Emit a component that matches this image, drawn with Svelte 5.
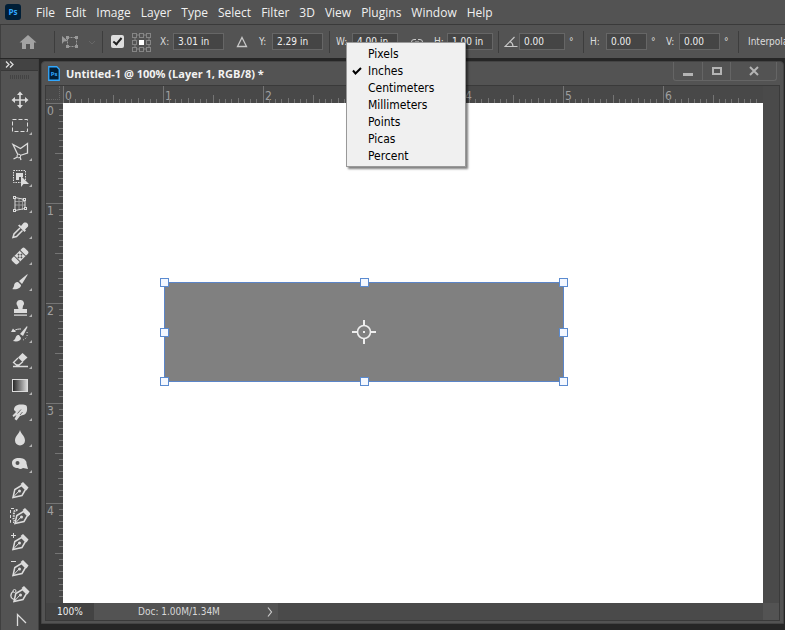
<script>
  const menus = ['File', 'Edit', 'Image', 'Layer', 'Type', 'Select', 'Filter', '3D', 'View', 'Plugins', 'Window', 'Help'];
  const units = ['Pixels', 'Inches', 'Centimeters', 'Millimeters', 'Points', 'Picas', 'Percent'];
  let unit = $state('Inches');
  let active = $state(true);
  const inch = 100;
  let box = $state({ x: '3.01 in', y: '2.29 in', w: '4.00 in', h: '1.00 in' });
  let w = $derived(parseFloat(box.w) * inch);
  let h = $derived(parseFloat(box.h) * inch);
  let left = $derived(Math.round(parseFloat(box.x) * inch - w / 2));
  let top = $derived(Math.round(parseFloat(box.y) * inch - h / 2));
  const handles = [[0, 0], [50, 0], [100, 0], [0, 50], [100, 50], [0, 100], [50, 100], [100, 100]];
  const ruler = (inches) => Array.from({ length: inches * 16 }, (_, i) => ({
    p: Math.floor(i * 6.25),
    len: i % 16 === 0 ? 17 : i % 8 === 0 ? 8 : i % 4 === 0 ? 5 : 4,
    label: i % 16 === 0 ? String(i / 16) : ''
  }));
  const across = ruler(7);
  const down = ruler(5);
  const pen = '<path d="M3 17.500L4.800 9.500l6.700-4 4 4-3.500 6z" fill="none" stroke="#dcdcdc" stroke-width="1.500"/><path d="M3 17.500l6-6.500" stroke="#dcdcdc"/><circle cx="9.500" cy="11" r="1.500" fill="#dcdcdc"/><path d="M10.500 4L13 2l5.500 5.500-2 3z" fill="#dcdcdc"/>';
  const tools = [
    { name: 'Move', more: false, art: '<path d="M10 3v14M3 10h14" stroke="#dcdcdc" stroke-width="1.600"/><path d="M10 1.500L7 5h6zM10 18.500L7 15h6zM1.500 10L5 7v6zM18.500 10L15 7v6z" fill="#dcdcdc"/>' },
    { name: 'Rectangular Marquee', more: true, art: '<rect x="2.500" y="3.500" width="15" height="12" fill="none" stroke="#dcdcdc" stroke-dasharray="4 2"/>' },
    { name: 'Polygonal Lasso', more: true, art: '<path d="M8 13L3 2.500l7.500 4 7-5V11L10 13.500M3.500 17l4-2M10 15l1 3" fill="none" stroke="#dcdcdc" stroke-width="1.300"/><circle cx="8.800" cy="14" r="1.800" fill="#535353" stroke="#dcdcdc"/>' },
    { name: 'Object Selection', more: true, art: '<rect x="3.500" y="2.500" width="12" height="12" fill="none" stroke="#dcdcdc" stroke-dasharray="1.500 1"/><path d="M6 5h7v4H9v3H6z" fill="#dcdcdc"/><path d="M11 8v11l2.500-3H19z" fill="#dcdcdc"/>' },
    { name: 'Perspective Crop', more: true, art: '<path d="M9 5v11M5 11h10M12.500 5v11M5 7.500h10" fill="none" stroke="#999"/><path d="M5 3.500l10 2v9l-10 2z" fill="none" stroke="#dcdcdc"/><g fill="#535353" stroke="#dcdcdc"><rect x="3.500" y="2.500" width="2" height="2"/><rect x="13.500" y="4.500" width="2" height="2"/><rect x="14.500" y="13.500" width="2" height="2"/><rect x="3.500" y="15.500" width="2" height="2"/></g>' },
    { name: 'Eyedropper', more: true, art: '<path d="M10 8l-6 6-1 3.500 3.500-1 6-6" fill="none" stroke="#dcdcdc" stroke-width="1.500"/><path d="M8 5.500l6.500 6.500 1.500-1.500-1-1L18 6.500c1-3-2-5-4.500-3.500L11 6 9.500 4.500z" fill="#dcdcdc"/>' },
    { name: 'Healing Brush', more: true, art: '<g transform="rotate(-45 10 10)"><rect x="1" y="6" width="18" height="8" rx="2" fill="#dcdcdc"/><path d="M6 6v8M14 6v8" stroke="#535353"/><g fill="#535353"><circle cx="10" cy="8" r="1"/><circle cx="10" cy="12" r="1"/><circle cx="8" cy="10" r="1"/><circle cx="12" cy="10" r="1"/></g></g>' },
    { name: 'Brush', more: true, art: '<path d="M17.500 2L9 9l3 3 5.500-9zM8 10c-3 0-4 2-4 4-1 2-1 3-2 3 5 1 9-1 9-4z" fill="#dcdcdc"/>' },
    { name: 'Clone Stamp', more: true, art: '<path d="M10 2a3.500 3.500 0 0 0-2.500 6L8.500 11H4v4h13v-4h-4.500L13 8A3.500 3.500 0 0 0 10 2zM4 16.500h13v1.200H4z" fill="#dcdcdc"/>' },
    { name: 'History Brush', more: true, art: '<path d="M17 2l-7 8 3 2 4.500-9zM9 11c-3 0-3 2-4 4l-2 2c4 1 8 0 8-3z" fill="#dcdcdc"/><path d="M4 7c2-2 5-2 7-2" fill="none" stroke="#dcdcdc"/><path d="M1 8l2-3.500L6 8z" fill="#dcdcdc"/><path d="M17 8c1 4-1 7-4 8" fill="none" stroke="#dcdcdc" stroke-dasharray="1 2"/>' },
    { name: 'Eraser', more: true, art: '<path d="M12.500 3l5 4.500-5 4.500-4.500-4.500z" fill="#dcdcdc"/><path d="M8 8l-4.500 4.500L6.500 15h2.500l4-3.500M3 16.500h15" fill="none" stroke="#dcdcdc" stroke-width="1.300"/>' },
    { name: 'Gradient', more: true, art: '<defs><linearGradient id="toolFade"><stop stop-color="#222"/><stop offset="1" stop-color="#ddd"/></linearGradient></defs><rect x="2.500" y="3.500" width="15" height="12" fill="url(#toolFade)" stroke="#dcdcdc"/>' },
    { name: 'Smudge', more: true, art: '<path d="M4 8c0-4 3-5.500 7-5.500 3 0 6 0 6 3 .5 4-1 7-4 7.500l-3 1-3.500 4.500-2-1.500 2-4-3 2-1-1.500L6 10z" fill="#dcdcdc"/><path d="M7.500 11.500L11 7.500M10 13l2.500-3" stroke="#535353" stroke-width=".8"/>' },
    { name: 'Blur', more: true, art: '<path d="M10 2c1 4 5 6 5 10.500a5 5 0 0 1-10 0C5 8 9 6 10 2z" fill="#dcdcdc"/>' },
    { name: 'Sponge', more: true, art: '<path d="M2 9c0-4 4-5.500 8-5 4 0 7 3 6.500 5.500L18 15l-5-1c-2 1.500-4 1-5 0-4 0-6-2-6-5zm3.500 0a2 2 0 1 0 4 0 2 2 0 1 0-4 0z" fill-rule="evenodd" fill="#dcdcdc"/>' },
    { name: 'Pen', more: false, art: pen },
    { name: 'Freeform Pen', more: false, art: `<g transform="translate(2 0)">${pen}</g><path d="M4 2.500H.5v14H4" fill="none" stroke="#dcdcdc" stroke-dasharray="3 2"/><path d="M7.500 4c-5 0-3 4-4 7 0 2 0 3 1 4" fill="none" stroke="#dcdcdc" stroke-width="2" stroke-dasharray="1.500 1"/>` },
    { name: 'Add Anchor Point', more: false, art: `${pen}<path d="M3.500 1v5M1 3.500h5" stroke="#dcdcdc"/>` },
    { name: 'Delete Anchor Point', more: false, art: `${pen}<path d="M1 3.500h5" stroke="#dcdcdc"/>` },
    { name: 'Curvature Pen', more: false, art: `<g transform="translate(1 0)">${pen}</g><path d="M4 7c-4 2-4 7-1 8l3 1" fill="none" stroke="#dcdcdc" stroke-width="1.300"/><circle cx="4.500" cy="7" r="1.500" fill="#535353" stroke="#dcdcdc"/>` },
    { name: 'Convert Point', more: false, art: '<path d="M7.500 16V4.500L16 13" fill="none" stroke="#dcdcdc" stroke-width="1.300"/>' }
  ];
</script>

<div class="app">
  <nav class="menubar" aria-label="Main menu">
    <svg class="logo" width="16" height="16" viewBox="0 0 16 16"><rect width="16" height="16" rx="3" fill="#001e36" /><text x="8" y="11" text-anchor="middle">Ps</text></svg>
    {#each menus as m}<button>{m}</button>{/each}
  </nav>

  <div class="options">
    <div class="cell home">
      <button aria-label="Home"><svg width="18" height="16" viewBox="0 0 18 16"><path d="M9 1l8.500 7.500H15V15h-4v-5H7v5H3V8.500H.5z" fill="#a2a2a2" /></svg></button>
    </div>
    <div class="cell sep">
      <button aria-label="Transform tool"><svg width="34" height="16" viewBox="0 0 34 16"><path d="M1 2l6 5-4 .5L1 10z" fill="#999" /><rect x="6.500" y="3.500" width="9" height="9" fill="none" stroke="#999" stroke-dasharray="2 1" /><path d="M5 2h3v3H5zM14 2h3v3h-3zM5 11h3v3H5zM14 11h3v3h-3z" fill="#999" /><path d="M28 7l3 3 3-3" fill="none" stroke="#666" /></svg></button>
    </div>
    <div class="cell sep check">
      <input type="checkbox" bind:checked={active} aria-label="Toggle reference point" />
      <svg width="20" height="20" viewBox="0 0 20 20"><g fill="none" stroke="#858585"><path d="M5 3h3M12 3h3M3 5v3M3 12v3M17 5v3M17 12v3M5 17h3M12 17h3" /><rect x=".5" y="1.500" width="4" height="4" /><rect x="7.500" y="1.500" width="4" height="4" /><rect x="14.500" y="1.500" width="4" height="4" /><rect x=".5" y="8.500" width="4" height="4" /><rect x="14.500" y="8.500" width="4" height="4" /><rect x=".5" y="15.500" width="4" height="4" /><rect x="7.500" y="15.500" width="4" height="4" /><rect x="14.500" y="15.500" width="4" height="4" /></g><path d="M7 8h5v5H7z" fill="#fff" /></svg>
    </div>
    <label class="cell"><span>X:</span><input class="wide" bind:value={box.x} /></label>
    <div class="cell mid"><button aria-label="Relative positioning"><svg width="12" height="12" viewBox="0 0 12 12"><path d="M6 1.500L10.500 10.500h-9z" fill="none" stroke="#c8c8c8" stroke-width="1.300" /></svg></button></div>
    <label class="cell"><span>Y:</span><input class="wide" bind:value={box.y} /></label>
    <label class="cell sep"><span>W:</span><input class="size" bind:value={box.w} /></label>
    <div class="cell mid"><button aria-label="Link size"><svg width="12" height="12" viewBox="0 0 12 12"><path d="M5 3.500H3a2.500 2.500 0 0 0 0 5h2M7 3.500h2a2.500 2.500 0 0 1 0 5H7M4 6h4" fill="none" stroke="#c8c8c8" /></svg></button></div>
    <label class="cell"><span>H:</span><input class="size" bind:value={box.h} /></label>
    <label class="cell sep angle"><svg width="14" height="12" viewBox="0 0 14 12" role="img" aria-label="Angle"><path d="M10.500 1L1 10.500h12.500M6 5.500c2 1 3 3 3 5" fill="none" stroke="#c8c8c8" stroke-width="1.200" /></svg><input class="size" value="0.00" /><i>°</i></label>
    <label class="cell sep"><span>H:</span><input value="0.00" /><i>°</i></label>
    <label class="cell skew"><span>V:</span><input value="0.00" /><i>°</i></label>
    <div class="cell sep last">Interpolation:</div>
  </div>

  <div class="popup" role="menu" aria-label="Units">
    {#each units as u}
      <button role="menuitemradio" aria-checked={u === unit} onclick={() => (unit = u)}>
        <svg width="10" height="10" viewBox="0 0 10 10">{#if u === unit}<path d="M1 4.500l2.500 3L9 2" fill="none" stroke="#000" stroke-width="2" />{/if}</svg>{u}
      </button>
    {/each}
  </div>

  <div class="work">
    <aside class="toolbar" aria-label="Tools">
      <button class="expand" aria-label="Expand tools"><svg width="10" height="7" viewBox="0 0 10 7"><path d="M1 .5l3 3-3 3M5 .5l3 3-3 3" fill="none" stroke="#ddd" stroke-width="1.300" /></svg></button>
      <div class="grip"></div>
      {#each tools as t}
        <button class="tool" class:more={t.more} aria-label={t.name}><svg width="20" height="20" viewBox="0 0 20 20">{@html t.art}</svg></button>
      {/each}
    </aside>

    <main class="window">
      <header>
        <svg width="12" height="15" viewBox="0 0 12 15"><path d="M.75.75h8l2.500 2.500v11H.75z" fill="#001e36" stroke="#31a8ff" stroke-width="1.300" /><text x="6" y="10" text-anchor="middle">Ps</text></svg>
        <h1>Untitled-1 @ 100% (Layer 1, RGB/8) *</h1>
        <div class="controls">
          <button aria-label="Minimize"><svg width="12" height="12" viewBox="0 0 12 12"><path d="M1 8h10v3H1z" fill="#b4b4b4" /></svg></button>
          <button aria-label="Maximize"><svg width="12" height="12" viewBox="0 0 12 12"><rect x="2" y="3" width="8" height="6" fill="none" stroke="#b4b4b4" stroke-width="2" /></svg></button>
          <button class="close" aria-label="Close"><svg width="12" height="12" viewBox="0 0 12 12"><path d="M2 2l8 8M10 2l-8 8" stroke="#b4b4b4" stroke-width="2" /></svg></button>
        </div>
      </header>
      <div class="frame">
        <div class="corner"></div>
        <svg class="ruler" height="17">
          {#each across as t}<path d="M{t.p + 0.5} {17 - t.len}V17" />{#if t.label}<text x={t.p + 2} y="14">{t.label}</text>{/if}{/each}
        </svg>
        <div class="gutter"></div>
        <svg class="ruler side" width="17">
          {#each down as t}<path d="M{17 - t.len} {t.p + 0.5}H17" />{#if t.label}<text x="1" y={t.p + 12}>{t.label}</text>{/if}{/each}
        </svg>
        <div class="canvas">
          <div class="shape" style="left:{left}px;top:{top}px;width:{w}px;height:{h}px">
            <div class="handles">{#each handles as [hx, hy]}<span style="left:{hx}%;top:{hy}%"></span>{/each}</div>
            <svg width="24" height="24" viewBox="0 0 24 24"><circle cx="12" cy="12" r="6.500" fill="none" stroke="#eee" stroke-width="1.600" /><path d="M12 0v6M12 18v6M0 12h6M18 12h6" stroke="#eee" stroke-width="2" /><path d="M11 11h2v2h-2z" fill="#eee" /></svg>
          </div>
        </div>
        <div class="gutter"></div>
        <footer>
          <input class="zoom" value="100%" aria-label="Zoom" />
          <button class="doc"><span>Doc: 1.00M/1.34M</span><svg width="6" height="10" viewBox="0 0 6 10"><path d="M1 .5L4.500 5 1 9.500" fill="none" stroke="#ccc" stroke-width="1.200" /></svg></button>
          <div class="resize"></div>
        </footer>
      </div>
    </main>
  </div>
</div>

<style>
  :global(body) { margin: 0; background: #262626; }
  .app {
    position: relative;
    display: flex;
    flex-direction: column;
    height: 100vh;
    overflow: hidden;
    box-sizing: border-box;
    background: #262626;
    color: #dcdcdc;
    font-family: "Noto Sans", "Open Sans", sans-serif;
    font-size: 10px;
  }
  button { all: unset; box-sizing: border-box; cursor: default; }
  svg { display: block; flex: none; }
  button:focus-visible { outline: 1px solid #5b8fd8; }
  .menubar {
    display: flex;
    flex: none;
    align-items: center;
    gap: 10px;
    height: 24px;
    padding-left: 5px;
    background: #535353;
    border-bottom: 1px solid #3a3a3a;
    color: #f0f0f0;
    font-family: "Open Sans", sans-serif;
    font-size: 12px;
  }
  .logo { margin-right: 5px; }
  .logo text { font: bold 8px "Open Sans", sans-serif; fill: #31a8ff; }
  .options {
    display: grid;
    grid-template-columns: 53px 48px 58px 65px 34px 70px 70px 35px 64px 85px 74px 81px 1fr;
    flex: none;
    align-items: center;
    height: 33px;
    overflow: hidden;
    background: #535353;
    border-left: 1px solid #3f3f3f;
    box-sizing: border-box;
    font-family: "DejaVu Sans Condensed", sans-serif;
  }
  .cell { display: flex; align-items: center; height: 22px; white-space: nowrap; }
  .sep { border-left: 1px solid #3d3d3d; padding-left: 6px; }
  .home { padding-left: 18px; }
  .check { gap: 8px; padding-left: 8px; }
  .check input {
    appearance: none;
    width: 13px;
    height: 13px;
    margin: 0;
    border-radius: 2px;
    background: #dedede;
    flex: none;
  }
  .check input:checked::after {
    content: "";
    display: block;
    box-sizing: border-box;
    width: 5px;
    height: 9px;
    margin: 1px 4px;
    border: solid #222;
    border-width: 0 2px 2px 0;
    transform: rotate(40deg);
  }
  .mid { justify-content: center; }
  .cell span { width: 13px; flex: none; }
  .sep span { width: 16px; }
  .cell input:not([type]) {
    box-sizing: border-box;
    width: 41px;
    height: 17px;
    padding: 0 4px;
    border: 1px solid #666;
    border-radius: 0;
    background: #454545;
    color: #eee;
    font: inherit;
  }
  .cell input.wide { width: 51px; }
  .cell input.size { width: 46px; }
  .cell i { margin-left: 4px; font-style: normal; }
  .angle { gap: 1px; padding-left: 5px; }
  .angle i { margin-left: 3px; }
  .skew { padding-left: 9px; }
  .last { padding-left: 9px; }
  .popup {
    position: absolute;
    z-index: 2;
    left: 346px;
    top: 42px;
    display: flex;
    flex-direction: column;
    box-sizing: border-box;
    width: 120px;
    padding: 2px;
    border: 1px solid #999;
    background: #f0f0f0;
    box-shadow: 2px 2px 2px rgba(0, 0, 0, 0.5);
    color: #000;
    font-family: "DejaVu Sans Condensed", sans-serif;
    font-size: 12px;
  }
  .popup button { display: flex; align-items: center; gap: 6px; height: 17px; padding-left: 3px; }
  .work { display: flex; flex: 1; min-height: 0; }
  .toolbar {
    display: flex;
    flex-direction: column;
    flex: none;
    box-sizing: border-box;
    width: 39px;
    margin-top: 1px;
    overflow: hidden;
    border: solid #3f3f3f;
    border-width: 0 1px;
    background: #535353;
  }
  .expand { flex: none; height: 12px; padding: 2px 4px; background: #434343; border-bottom: 1px solid #383838; }
  .grip {
    flex: none;
    height: 4px;
    margin: 4px 9px 8px;
    background: repeating-linear-gradient(90deg, #434343 0 1px, transparent 1px 2px);
  }
  .tool { position: relative; flex: none; height: 26px; padding: 3px 0 3px 9px; }
  .more::after {
    content: "";
    position: absolute;
    right: 6px;
    bottom: 4px;
    width: 3px;
    height: 3px;
    background: #b4b4b4;
    clip-path: polygon(100% 0, 100% 100%, 0 100%);
  }
  .window {
    display: flex;
    flex: 1;
    flex-direction: column;
    min-width: 0;
    box-sizing: border-box;
    margin: 3px 1px 6px 2px;
    padding: 0 3px 2px;
    border: 1px solid #444;
    border-radius: 4px 4px 0 0;
    background: #535353;
  }
  header { display: flex; flex: none; height: 23px; padding-left: 3px; align-items: center; }
  header text { font: bold 6px "Open Sans", sans-serif; fill: #31a8ff; }
  h1 { flex: 1; margin: 0 0 0 6px; color: #f2f2f2; font: 700 11px "Open Sans", sans-serif; white-space: nowrap; }
  .controls {
    display: flex;
    align-self: flex-start;
    height: 19px;
    margin-right: 3px;
    box-sizing: border-box;
    border: 1px solid #656565;
    border-top: 0;
    border-radius: 0 0 3px 3px;
  }
  .controls button { display: grid; place-items: center; width: 28px; }
  .controls button + button { border-left: 1px solid #656565; }
  .controls .close { width: 46px; }
  .frame {
    display: grid;
    grid-template: 17px 1fr 17px / 17px 1fr 16px;
    flex: 1;
    min-height: 0;
    border: 1px solid #3a3a3a;
    background: #4a4a4a;
  }
  .corner { border: dotted #666; border-width: 0 1px 1px 0; margin: 0 3px 3px 0; }
  .ruler { display: block; width: 100%; overflow: hidden; background: #484848; }
  .ruler.side { width: 17px; height: 100%; }
  .ruler path { stroke: #747474; }
  .ruler text { fill: #a0a0a0; font: 12px "DejaVu Sans Condensed", sans-serif; }
  .gutter { background: #4a4a4a; }
  .canvas { position: relative; overflow: hidden; background: #fff; }
  .shape {
    position: absolute;
    display: grid;
    place-items: center;
    background: #808080;
    box-shadow: inset 0 0 0 1px #5b85c8;
  }
  .handles { position: absolute; inset: 0 1px 1px 0; }
  .handles span {
    position: absolute;
    box-sizing: border-box;
    width: 9px;
    height: 9px;
    margin: -4px;
    border: 1px solid #5b8bd0;
    background: #f4f8ff;
  }
  footer { display: flex; grid-column: 1 / -1; background: #4a4a4a; font-family: "DejaVu Sans Condensed", sans-serif; }
  .zoom { box-sizing: border-box; width: 48px; padding: 0 0 0 11px; border: 0; background: #434343; color: #f0f0f0; font: inherit; }
  .doc { display: flex; align-items: center; width: 184px; padding-left: 44px; background: #535353; color: #d8d8d8; }
  .doc span { width: 129px; }
  .resize { width: 16px; margin-left: auto; background: #535353; }
</style>
